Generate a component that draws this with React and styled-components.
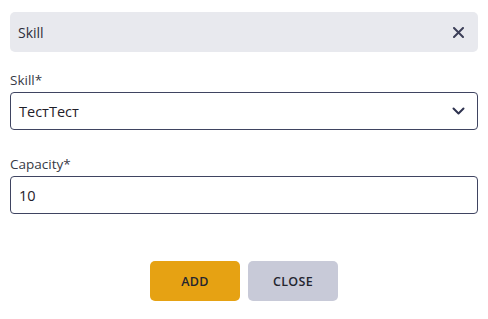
import React from 'react'
import styled, { createGlobalStyle } from 'styled-components'

const Font = `"Open Sans", "Noto Sans", sans-serif`

const GlobalStyle = createGlobalStyle`
  body {
    margin: 0;
    background: #ffffff;
    font-family: ${Font};
  }
`

const Modal = styled.div`
  width: 488px;
  padding: 12px 10px 18px;
  box-sizing: border-box;
`

const Header = styled.div`
  display: flex;
  align-items: center;
  justify-content: space-between;
  height: 40px;
  padding: 0 14px 0 8px;
  background: #e8e9ee;
  border-radius: 5px;
`

const Title = styled.span`
  font-size: 14px;
  font-weight: 500;
  color: #2b2d3a;
`

const IconButton = styled.button`
  display: flex;
  align-items: center;
  justify-content: center;
  padding: 0;
  border: none;
  background: none;
  cursor: pointer;
`

const Field = styled.div`
  display: flex;
  flex-direction: column;
  gap: 3px;
  margin-top: ${p => p.$top}px;
`

const Label = styled.label`
  font-size: 13.5px;
  color: #383a46;
  line-height: 18px;
`

const Box = styled.div`
  display: flex;
  align-items: center;
  justify-content: space-between;
  height: 38px;
  padding: 0 12px 0 8px;
  border: 1px solid #3f4461;
  border-radius: 4px;
  box-sizing: border-box;
  font-size: 14.5px;
  color: #1f2029;
`

const Actions = styled.div`
  display: flex;
  justify-content: center;
  gap: 8px;
  margin-top: 47px;
`

const Button = styled.button`
  width: 90px;
  height: 40px;
  border: none;
  border-radius: 5px;
  background: ${p => (p.$primary ? '#e6a213' : '#c8cad8')};
  color: #24252f;
  font-family: ${Font};
  font-size: 12.5px;
  font-weight: 600;
  letter-spacing: 0.3px;
  cursor: pointer;
`

export default function App() {
  return (
    <>
      <GlobalStyle />
      <Modal>
        <Header>
          <Title>Skill</Title>
          <IconButton aria-label="close">
            <svg width="11" height="11" viewBox="0 0 11 11">
              <path d="M1 1L10 10M10 1L1 10" stroke="#3c3f58" strokeWidth="2" strokeLinecap="round" />
            </svg>
          </IconButton>
        </Header>
        <Field $top={19}>
          <Label>Skill*</Label>
          <Box>
            <span>ТестТест</span>
            <svg width="13" height="8" viewBox="0 0 13 8">
              <path d="M1.5 1.5L6.5 6.5L11.5 1.5" stroke="#2f3350" strokeWidth="2" fill="none" strokeLinecap="round" strokeLinejoin="round" />
            </svg>
          </Box>
        </Field>
        <Field $top={25}>
          <Label>Capacity*</Label>
          <Box>
            <span>10</span>
          </Box>
        </Field>
        <Actions>
          <Button $primary>ADD</Button>
          <Button>CLOSE</Button>
        </Actions>
      </Modal>
    </>
  )
}
